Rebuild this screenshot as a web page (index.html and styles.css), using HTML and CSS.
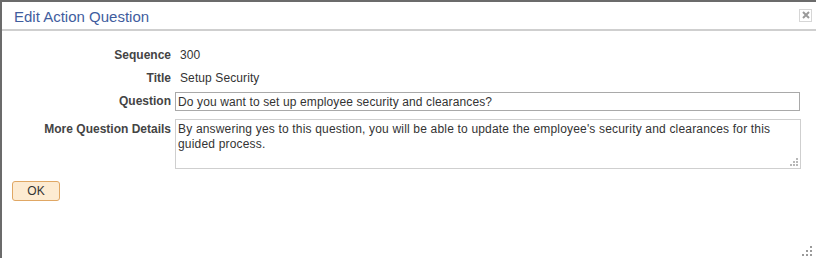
FILE: index.html
```html
<!DOCTYPE html>
<html>
<head>
<meta charset="utf-8">
<link rel="stylesheet" href="styles.css">
</head>
<body>
<div class="dialog">
  <div class="header">
    <span class="title">Edit Action Question</span>
    <span class="close" title="Close">
      <svg width="10" height="10" viewBox="0 0 10 10"><path d="M2 2 L8 8 M8 2 L2 8" stroke="#9a9a9a" stroke-width="2"/></svg>
    </span>
  </div>
  <div class="form">
    <div class="row r-seq">
      <div class="label">Sequence</div>
      <div class="value">300</div>
    </div>
    <div class="row r-title">
      <div class="label">Title</div>
      <div class="value">Setup Security</div>
    </div>
    <div class="row r-q">
      <div class="label">Question</div>
      <input class="input" type="text" value="Do you want to set up employee security and clearances?">
    </div>
    <div class="row r-more">
      <div class="label">More Question Details</div>
      <div class="ta-wrap">
        <textarea class="textarea">By answering yes to this question, you will be able to update the employee's security and clearances for this guided process.</textarea>
        <svg class="ta-grip" width="9" height="9" viewBox="0 0 9 9"><g fill="#b8b8b8"><rect x="7" y="1" width="2" height="2"/><rect x="4" y="4" width="2" height="2"/><rect x="7" y="4" width="2" height="2"/><rect x="1" y="7" width="2" height="2"/><rect x="4" y="7" width="2" height="2"/><rect x="7" y="7" width="2" height="2"/></g></svg>
      </div>
    </div>
    <div class="actions">
      <button class="ok" type="button">OK</button>
    </div>
  </div>
  <svg class="grip" width="11" height="11" viewBox="0 0 11 11"><g fill="#9a9a9a"><rect x="8" y="0" width="2" height="2"/><rect x="4" y="4" width="2" height="2"/><rect x="8" y="4" width="2" height="2"/><rect x="0" y="8" width="2" height="2"/><rect x="4" y="8" width="2" height="2"/><rect x="8" y="8" width="2" height="2"/></g></svg>
</div>
</body>
</html>
```
FILE: styles.css
```css
html, body {
  margin: 0;
  padding: 0;
  background: #fff;
}
body {
  font-family: "Liberation Sans", Arial, sans-serif;
  font-size: 12px;
  color: #333;
}
.dialog {
  position: relative;
  width: 814px;
  height: 256px;
  border-top: 2px solid #6b6b6b;
  border-left: 2px solid #6b6b6b;
  overflow: hidden;
}
.header {
  height: 27px;
  border-bottom: 2px solid #cfcfcf;
  display: flex;
  align-items: center;
  justify-content: space-between;
  padding: 0 4px 0 12px;
}
.title {
  font-size: 15px;
  color: #3f5d9e;
  padding-top: 1px;
}
.close {
  width: 11px;
  height: 11px;
  border: 1px solid #d6d6d6;
  display: flex;
  align-items: center;
  justify-content: center;
  margin-bottom: 1px;
}
.form {
  padding-top: 16px;
}
.row {
  display: flex;
  align-items: flex-start;
}
.label {
  width: 169px;
  text-align: right;
  font-weight: bold;
  color: #444;
  line-height: 16px;
  flex: none;
}
.value {
  padding-left: 9px;
  line-height: 16px;
  color: #333;
  letter-spacing: 0.1px;
}
.r-title {
  margin-top: 7px;
}
.r-q {
  margin-top: 6px;
  align-items: center;
}
.r-q .label {
  line-height: 19px;
}
.input {
  margin: 0 0 0 4px;
  width: 625px;
  height: 19px;
  box-sizing: border-box;
  border: 1px solid #a9a9a9;
  padding: 0 2px;
  font-family: "Liberation Sans", Arial, sans-serif;
  font-size: 12px;
  letter-spacing: 0.12px;
  color: #333;
  outline: none;
}
.r-more {
  margin-top: 8px;
}
.r-more .label {
  padding-top: 2px;
}
.ta-wrap {
  position: relative;
  margin-left: 4px;
  width: 626px;
  height: 50px;
}
.textarea {
  display: block;
  width: 626px;
  height: 50px;
  box-sizing: border-box;
  margin: 0;
  border: 1px solid #cfcfcf;
  padding: 2px 18px 2px 2px;
  font-family: "Liberation Sans", Arial, sans-serif;
  font-size: 12px;
  line-height: 15px;
  letter-spacing: 0.18px;
  color: #333;
  resize: none;
  overflow: hidden;
  outline: none;
}
.ta-grip {
  position: absolute;
  right: 3px;
  bottom: 3px;
}
.actions {
  padding: 12px 0 0 10px;
}
.ok {
  width: 48px;
  height: 20px;
  box-sizing: border-box;
  border: 1px solid #e0a764;
  border-radius: 3px;
  background: #fdebd2;
  font-family: "Liberation Sans", Arial, sans-serif;
  font-size: 12px;
  color: #333;
  padding: 0;
  margin: 0;
}
.grip {
  position: absolute;
  right: 3px;
  bottom: 1px;
}
```
